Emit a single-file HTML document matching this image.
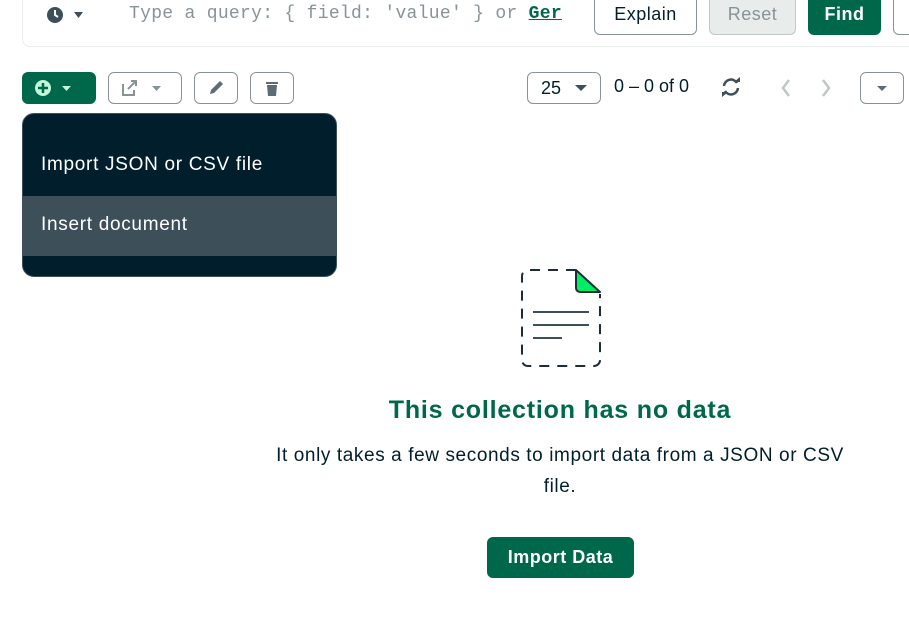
<!DOCTYPE html>
<html><head><style>
body{margin:0;width:909px;height:626px;background:#fff;font-family:"Liberation Sans",sans-serif;position:relative;overflow:hidden;color:#001e2b}
.a{position:absolute}
.btn{position:absolute;border:1px solid #889397;border-radius:6px;box-sizing:border-box;background:#fff;display:flex;align-items:center;justify-content:center;font-size:18px}
</style></head><body>
<div class="a" style="left:22px;top:-10px;width:900px;height:57px;border:1px solid #e8edeb;border-radius:8px;box-sizing:border-box"></div>
<svg class="a" style="left:46px;top:6px" width="42" height="18"><circle cx="9" cy="9" r="8" fill="#3d4f58"/><path d="M9 4v5l3 2" stroke="#fff" stroke-width="2" fill="none"/><path d="M28 6h9l-4.5 6z" fill="#3d4f58"/></svg>
<div class="a" style="left:129px;top:4px;font-family:'Liberation Mono',monospace;font-size:18px;color:#889397;letter-spacing:0.3px">Type a query: { field: 'value' } or <span style="color:#00684a;font-weight:bold;text-decoration:underline">Ger</span></div>
<div class="btn" style="left:594px;top:-6px;width:103px;height:41px;color:#001e2b;letter-spacing:0.5px">Explain</div>
<div class="btn" style="left:709px;top:-6px;width:87px;height:41px;background:#e8edeb;border-color:#c1c7c6;color:#889397;letter-spacing:0.5px">Reset</div>
<div class="btn" style="left:808px;top:-6px;width:73px;height:41px;background:#00684a;border-color:#00684a;color:#fff;font-weight:bold;letter-spacing:0.5px">Find</div>
<div class="btn" style="left:893px;top:-6px;width:30px;height:41px"></div>

<div class="btn" style="left:22px;top:72px;width:74px;height:32px;background:#00684a;border-color:#00684a"><svg width="50" height="18"><circle cx="9" cy="9" r="8" fill="#c3f5d8"/><path d="M9 4v10M4 9h10" stroke="#00684a" stroke-width="2.5"/><path d="M28 7h9l-4.5 5z" fill="#c3f5d8"/></svg></div>
<div class="btn" style="left:108px;top:72px;width:74px;height:32px"><svg width="50" height="18"><path d="M3 5v11h11v-5M8 10l8-8M11 2h5v5" stroke="#889397" stroke-width="2" fill="none"/><path d="M32 7h9l-4.5 5z" fill="#889397"/></svg></div>
<div class="btn" style="left:194px;top:72px;width:44px;height:32px"><svg width="18" height="18"><path d="M3 15l1-4 9-9 3 3-9 9z" fill="#5c6c75"/></svg></div>
<div class="btn" style="left:250px;top:72px;width:44px;height:32px"><svg width="18" height="18"><rect x="3" y="3" width="12" height="2" fill="#5c6c75"/><path d="M4 6h10l-1 11H5z" fill="#5c6c75"/></svg></div>

<div class="btn" style="left:527px;top:72px;width:74px;height:32px"><span style="margin-right:14px">25</span><svg width="12" height="8"><path d="M0 1h12l-6 6z" fill="#3d4f58"/></svg></div>
<div class="a" style="left:614px;top:76px;font-size:18px">0 – 0 of 0</div>
<svg class="a" style="left:720px;top:77px" width="22" height="20"><path d="M4 9a7 7 0 0 1 13-3M18 11a7 7 0 0 1-13 3" stroke="#3d4f58" stroke-width="2.5" fill="none"/><path d="M14 5h6V0zM8 15H2v5z" fill="#3d4f58"/></svg>
<svg class="a" style="left:776px;top:78px" width="60" height="20"><path d="M13 2l-6 8 6 8M47 2l6 8-6 8" stroke="#c1c7c6" stroke-width="2.5" fill="none"/></svg>
<div class="btn" style="left:860px;top:72px;width:44px;height:32px"><svg width="10" height="7"><path d="M0 1h10l-5 5z" fill="#5c6c75"/></svg></div>

<div class="a" style="left:22px;top:113px;width:315px;height:164px;background:#001e2b;border:1px solid #3d4f58;border-radius:12px;box-sizing:border-box;overflow:hidden">
<div class="a" style="left:18px;top:40px;color:#fff;font-size:19px;letter-spacing:0.7px">Import JSON or CSV file</div>
<div class="a" style="left:0;top:82px;width:315px;height:60px;background:#3d4f58"></div>
<div class="a" style="left:18px;top:100px;color:#fff;font-size:19px;letter-spacing:0.7px">Insert document</div>
</div>

<svg class="a" style="left:500px;top:250px" width="120" height="130"><path d="M76 20H28a6 6 0 0 0-6 6v84a6 6 0 0 0 6 6h66a6 6 0 0 0 6-6V44" stroke="#1c2d38" stroke-width="2" fill="none" stroke-dasharray="10 8"/><path d="M76 20v18a4 4 0 0 0 4 4h20z" fill="#00ed64" stroke="#1c2d38" stroke-width="2" stroke-linejoin="round"/><path d="M33 62h56M33 75h56M33 88h29" stroke="#3d4f58" stroke-width="2"/></svg>
<div class="a" style="left:260px;top:396px;width:600px;text-align:center;color:#00684a;font-weight:bold;font-size:25px;letter-spacing:0.8px">This collection has no data</div>
<div class="a" style="left:268px;top:440px;width:584px;text-align:center;font-size:19px;line-height:31px;letter-spacing:0.6px">It only takes a few seconds to import data from a JSON or CSV file.</div>
<div class="btn" style="left:487px;top:537px;width:147px;height:41px;background:#00684a;border-color:#00684a;color:#fff;font-weight:bold;letter-spacing:0.5px">Import Data</div>
</body></html>
